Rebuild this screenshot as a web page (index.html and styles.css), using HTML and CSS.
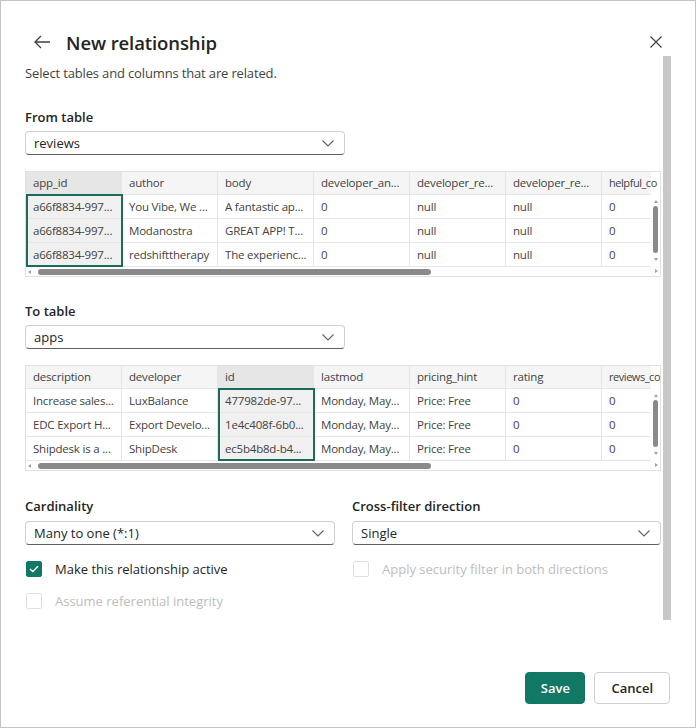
FILE: index.html
```html
<!DOCTYPE html>
<html>
<head>
<meta charset="utf-8">
<link rel="stylesheet" href="styles.css">
</head>
<body>
<div class="dialog">
  <div class="header">
    <svg class="back" width="18" height="14" viewBox="0 0 18 14"><path d="M8 1 L2 7 L8 13 M2 7 H17" fill="none" stroke="#424242" stroke-width="1.3"/></svg>
    <h1 class="title">New relationship</h1>
    <svg class="close" width="12" height="12" viewBox="0 0 12 12"><path d="M0.5 0.5 L11.5 11.5 M11.5 0.5 L0.5 11.5" stroke="#424242" stroke-width="1.2"/></svg>
  </div>
  <div class="body">
    <div class="main">
      <p class="subtitle">Select tables and columns that are related.</p>

      <div class="label">From table</div>
      <div class="select"><span>reviews</span><svg class="chev" width="12" height="7" viewBox="0 0 12 7"><path d="M0.5 0.5 L6 6 L11.5 0.5" fill="none" stroke="#616161" stroke-width="1.1"/></svg></div>

      <div class="grid">
        <div class="cols">
          <div class="row head">
            <div class="cell sel-h">app_id</div><div class="cell">author</div><div class="cell">body</div><div class="cell">developer_an...</div><div class="cell">developer_re...</div><div class="cell">developer_re...</div><div class="cell last">helpful_co</div>
          </div>
          <div class="rows">
            <div class="selbox c0"></div>
            <div class="row"><div class="cell sel">a66f8834-997...</div><div class="cell">You Vibe, We ...</div><div class="cell">A fantastic ap...</div><div class="cell">0</div><div class="cell">null</div><div class="cell">null</div><div class="cell last">0</div></div>
            <div class="row"><div class="cell sel">a66f8834-997...</div><div class="cell">Modanostra</div><div class="cell">GREAT APP! T...</div><div class="cell">0</div><div class="cell">null</div><div class="cell">null</div><div class="cell last">0</div></div>
            <div class="row"><div class="cell sel">a66f8834-997...</div><div class="cell">redshifttherapy</div><div class="cell">The experienc...</div><div class="cell">0</div><div class="cell">null</div><div class="cell">null</div><div class="cell last">0</div></div>
          </div>
          <div class="hscroll"><span class="arr-l"></span><span class="hthumb"></span></div>
        </div>
        <div class="vscroll"><span class="arr-u"></span><span class="vthumb"></span><span class="arr-d"></span><span class="arr-r"></span></div>
      </div>

      <div class="label gap-top">To table</div>
      <div class="select"><span>apps</span><svg class="chev" width="12" height="7" viewBox="0 0 12 7"><path d="M0.5 0.5 L6 6 L11.5 0.5" fill="none" stroke="#616161" stroke-width="1.1"/></svg></div>

      <div class="grid">
        <div class="cols">
          <div class="row head">
            <div class="cell">description</div><div class="cell">developer</div><div class="cell sel-h">id</div><div class="cell">lastmod</div><div class="cell">pricing_hint</div><div class="cell">rating</div><div class="cell last">reviews_co</div>
          </div>
          <div class="rows">
            <div class="selbox c2"></div>
            <div class="row"><div class="cell">Increase sales...</div><div class="cell">LuxBalance</div><div class="cell sel">477982de-97...</div><div class="cell">Monday, May...</div><div class="cell">Price: Free</div><div class="cell">0</div><div class="cell last">0</div></div>
            <div class="row"><div class="cell">EDC Export H...</div><div class="cell">Export Develo...</div><div class="cell sel">1e4c408f-6b0...</div><div class="cell">Monday, May...</div><div class="cell">Price: Free</div><div class="cell">0</div><div class="cell last">0</div></div>
            <div class="row"><div class="cell">Shipdesk is a ...</div><div class="cell">ShipDesk</div><div class="cell sel">ec5b4b8d-b4...</div><div class="cell">Monday, May...</div><div class="cell">Price: Free</div><div class="cell">0</div><div class="cell last">0</div></div>
          </div>
          <div class="hscroll"><span class="arr-l"></span><span class="hthumb"></span></div>
        </div>
        <div class="vscroll"><span class="arr-u"></span><span class="vthumb"></span><span class="arr-d"></span><span class="arr-r"></span></div>
      </div>

      <div class="options">
        <div class="opt">
          <div class="label">Cardinality</div>
          <div class="select s2"><span>Many to one (*:1)</span><svg class="chev" width="12" height="7" viewBox="0 0 12 7"><path d="M0.5 0.5 L6 6 L11.5 0.5" fill="none" stroke="#616161" stroke-width="1.1"/></svg></div>
          <label class="check"><span class="box on"><svg width="10" height="8" viewBox="0 0 10 8"><path d="M1 4 L3.8 6.6 L9 1.2" fill="none" stroke="#fff" stroke-width="1.4"/></svg></span>Make this relationship active</label>
          <label class="check disabled second"><span class="box"></span>Assume referential integrity</label>
        </div>
        <div class="opt">
          <div class="label">Cross-filter direction</div>
          <div class="select s2"><span>Single</span><svg class="chev" width="12" height="7" viewBox="0 0 12 7"><path d="M0.5 0.5 L6 6 L11.5 0.5" fill="none" stroke="#616161" stroke-width="1.1"/></svg></div>
          <label class="check disabled"><span class="box"></span>Apply security filter in both directions</label>
        </div>
      </div>
    </div>
    <div class="pagescroll"></div>
  </div>
  <div class="footer">
    <button class="btn primary">Save</button>
    <button class="btn">Cancel</button>
  </div>
</div>
</body>
</html>
```

FILE: styles.css
```css
* { box-sizing: border-box; }
html, body { margin: 0; padding: 0; background: #fff; }
body { font-family: "Open Sans", "Noto Sans", sans-serif; color: #242424; }

.dialog {
  width: 696px;
  height: 728px;
  border: 1px solid #c4c4c4;
  background: #fff;
  display: flex;
  flex-direction: column;
}

.header {
  margin-top: 27px;
  height: 28px;
  display: flex;
  align-items: center;
  padding: 0 33px 0 32px;
}
.back { flex: none; }
.title {
  margin: 0 0 0 15px;
  font-size: 18.5px;
  font-weight: 600;
  color: #242424;
  flex: 1;
  letter-spacing: -0.1px;
}
.close { flex: none; }

.body {
  display: flex;
  height: 564px;
  padding: 0 24px 0 24px;
}
.main { width: 636px; flex: none; }
.pagescroll {
  margin-left: 2px;
  width: 8px;
  height: 564px;
  background: #c8c8c8;
}

.subtitle {
  margin: 7px 0 0 0;
  font-size: 13px;
  line-height: 20px;
  color: #424242;
  letter-spacing: -0.15px;
}

.label {
  margin-top: 24px;
  font-size: 13px;
  font-weight: 600;
  line-height: 20px;
  color: #242424;
}
.label.gap-top { margin-top: 24px; }

.select {
  margin-top: 4px;
  width: 320px;
  height: 24px;
  border: 1px solid #d1d1d1;
  border-bottom-color: #616161;
  border-radius: 4px;
  display: flex;
  align-items: center;
  justify-content: space-between;
  padding: 0 10px 0 8px;
  font-size: 13px;
  color: #242424;
}
.select.s2 { width: 100%; margin-top: 5px; }

.grid {
  margin-top: 16px;
  width: 636px;
  height: 106px;
  border: 1px solid #e0e0e0;
  display: flex;
  overflow: hidden;
}
.cols { width: 625px; flex: none; position: relative; }
.row { display: flex; height: 24px; border-bottom: 1px solid #e6e6e6; }
.row.head { height: 23px; background: #f5f5f5; }
.row.head .cell { line-height: 21px; }
.rows { position: relative; }
.cell {
  width: 96px;
  flex: none;
  padding: 0 7px;
  border-right: 1px solid #e6e6e6;
  font-size: 11.5px;
  line-height: 24px;
  color: #424242;
  white-space: nowrap;
  overflow: hidden;
  letter-spacing: -0.2px;
}
.cell.last { border-right: none; width: 49px; padding-right: 0; overflow: visible; }
.row.head .cell.last { font-size: 11px; letter-spacing: -0.45px; }
.cell.sel-h { background: #e6e6e6; }
.cell.sel { background: #f0f0f0; }
.selbox {
  position: absolute;
  top: -1px;
  width: 97px;
  height: 73px;
  border: 2px solid #1b6b5a;
  pointer-events: none;
}
.selbox.c0 { left: 0; }
.selbox.c2 { left: 192px; }

.hscroll {
  height: 10px;
  position: relative;
}
.arr-l {
  position: absolute; left: 2px; top: 3px;
  width: 0; height: 0;
  border-top: 2px solid transparent; border-bottom: 2px solid transparent;
  border-right: 3px solid #a0a0a0;
}
.hthumb {
  position: absolute; left: 12px; top: 2px;
  width: 393px; height: 6px;
  border-radius: 3px;
  background: #8a8a8a;
}

.vscroll { flex: 1; position: relative; }
.arr-u {
  position: absolute; left: 3px; top: 28px;
  border-left: 2px solid transparent; border-right: 2px solid transparent;
  border-bottom: 3px solid #a0a0a0;
}
.vthumb {
  position: absolute; left: 2px; top: 34px;
  width: 5px; height: 47px;
  border-radius: 3px;
  background: #8a8a8a;
}
.arr-d {
  position: absolute; left: 3px; top: 86px;
  border-left: 2px solid transparent; border-right: 2px solid transparent;
  border-top: 3px solid #a0a0a0;
}
.arr-r {
  position: absolute; left: 4px; top: 97px;
  border-top: 2px solid transparent; border-bottom: 2px solid transparent;
  border-left: 3px solid #a0a0a0;
}

.options {
  display: grid;
  grid-template-columns: 310px 309px;
  column-gap: 17px;
}
.options .label { margin-top: 25px; }

.check {
  display: flex;
  align-items: center;
  margin-top: 14px;
  height: 20px;
  font-size: 13px;
  color: #242424;
}
.check.second { margin-top: 12px; }
.check .box {
  width: 16px; height: 16px;
  margin: 0 13px 0 1px;
  border: 1px solid #e0e0e0;
  border-radius: 2px;
  display: flex; align-items: center; justify-content: center;
}
.check .box.on { background: #117865; border-color: #117865; }
.check.disabled { color: #bdbdbd; }

.footer {
  flex: 1;
  display: flex;
  justify-content: flex-end;
  align-items: flex-start;
  padding: 52px 25px 0 0;
  gap: 9px;
}
.btn {
  height: 32px;
  border-radius: 4px;
  border: 1px solid #d1d1d1;
  background: #fff;
  font-family: "Open Sans", "Noto Sans", sans-serif;
  font-size: 13px;
  font-weight: 600;
  color: #242424;
  padding: 0 16px;
  min-width: 74px;
}
.btn.primary {
  background: #117865;
  border-color: #117865;
  color: #fff;
  min-width: 60px;
  padding: 0 14px;
  margin-left: 1px;
}
```
